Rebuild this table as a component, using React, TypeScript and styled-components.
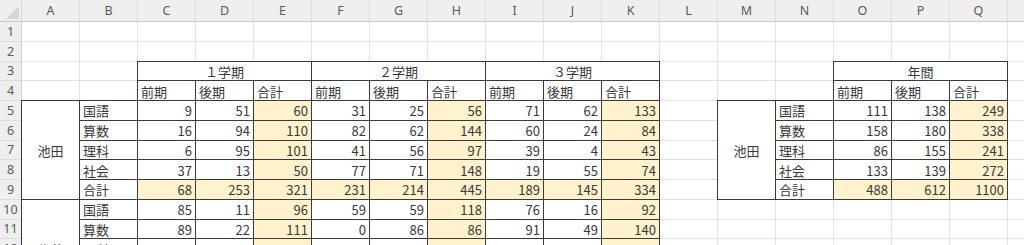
import styled, { createGlobalStyle } from "styled-components";

const GlobalStyle = createGlobalStyle`
  html, body {
    margin: 0;
    padding: 0;
    height: 245px;
    overflow: hidden;
    background: #fff;
  }
`;

type Align = "left" | "right" | "center";

interface CellData {
    text?: string | number;
    align?: Align;
    fill?: boolean;
    border?: boolean;
    colSpan?: number;
    rowSpan?: number;
}

const COLS = "ABCDEFGHIJKLMNOPQR".split("");
const ROWS = 14;

const colIndex = (letter: string) => COLS.indexOf(letter) + 2;

const Sheet = styled.div`
  display: grid;
  grid-template-columns: 22px repeat(18, 58px);
  grid-template-rows: 22px repeat(${ROWS}, 19.75px);
  font-family: "Noto Sans CJK JP", "Noto Sans", sans-serif;
  font-size: 13px;
  color: #383838;
`;

const Corner = styled.div`
  grid-column: 1;
  grid-row: 1;
  background: #efefef;
  border-right: 1px solid #d6d6d6;
  border-bottom: 1px solid #c8c8c8;
  display: flex;
  align-items: flex-end;
  justify-content: flex-end;
  padding: 0 2px 2px 0;
  box-sizing: border-box;
`;

const ColHead = styled.div<{ $col: number }>`
  grid-column: ${(p) => p.$col};
  grid-row: 1;
  background: #efefef;
  border-right: 1px solid #dedede;
  border-bottom: 1px solid #c8c8c8;
  display: flex;
  align-items: center;
  justify-content: center;
  font-family: "Noto Sans", "Liberation Sans", sans-serif;
  font-size: 12.5px;
  color: #5a5a5a;
  box-sizing: border-box;
`;

const RowHead = styled.div<{ $row: number }>`
  grid-column: 1;
  grid-row: ${(p) => p.$row};
  background: #efefef;
  border-right: 1px solid #d2d2d2;
  border-bottom: 1px solid #dedede;
  display: flex;
  align-items: center;
  justify-content: center;
  font-family: "Noto Sans", "Liberation Sans", sans-serif;
  font-size: 12.5px;
  color: #5a5a5a;
  box-sizing: border-box;
`;

const Cell = styled.div<{
    $col: number;
    $row: number;
    $colSpan: number;
    $rowSpan: number;
    $align: Align;
    $fill: boolean;
    $border: boolean;
}>`
  grid-column: ${(p) => p.$col} / span ${(p) => p.$colSpan};
  grid-row: ${(p) => p.$row} / span ${(p) => p.$rowSpan};
  box-sizing: border-box;
  display: flex;
  align-items: center;
  justify-content: ${(p) =>
    p.$align === "left" ? "flex-start" : p.$align === "right" ? "flex-end" : "center"};
  padding: 1px 3px 0 3px;
  white-space: nowrap;
  overflow: hidden;
  background: ${(p) => (p.$fill ? "#fff2cc" : "#fff")};
  border-right: 1px solid ${(p) => (p.$border ? "#3a3a3a" : "#e1e1e1")};
  border-bottom: 1px solid ${(p) => (p.$border ? "#3a3a3a" : "#e1e1e1")};
  ${(p) =>
    p.$border &&
    `
    margin: -1px 0 0 -1px;
    border-top: 1px solid #3a3a3a;
    border-left: 1px solid #3a3a3a;
    position: relative;
    z-index: 1;
  `}
`;

const cells: Record<string, CellData> = {};

const put = (key: string, data: CellData) => {
    cells[key] = { ...cells[key], ...data };
};

const box = (c1: string, c2: string, r1: number, r2: number) => {
    for (let c = colIndex(c1); c <= colIndex(c2); c++) {
        for (let r = r1; r <= r2; r++) {
            put(`${c}:${r + 1}`, { border: true });
        }
    }
};

// left table
const terms = ["１学期", "２学期", "３学期"];
const subjects = ["国語", "算数", "理科", "社会", "合計"];

const ikeda = [
    [9, 51, 60, 31, 25, 56, 71, 62, 133],
    [16, 94, 110, 82, 62, 144, 60, 24, 84],
    [6, 95, 101, 41, 56, 97, 39, 4, 43],
    [37, 13, 50, 77, 71, 148, 19, 55, 74],
    [68, 253, 321, 231, 214, 445, 189, 145, 334],
];

const sato = [
    [85, 11, 96, 59, 59, 118, 76, 16, 92],
    [89, 22, 111, 0, 86, 86, 91, 49, 140],
    [42, 57, 99, 63, 28, 91, 35, 70, 105],
    [71, 38, 109, 24, 93, 117, 58, 12, 70],
    [287, 128, 415, 146, 266, 412, 260, 147, 407],
];

const yearly = [
    [111, 138, 249],
    [158, 180, 338],
    [86, 155, 241],
    [133, 139, 272],
    [488, 612, 1100],
];

box("C", "K", 3, 9);
box("A", "K", 5, 14);
box("O", "Q", 3, 9);
box("M", "Q", 5, 9);

terms.forEach((t, i) => {
    put(`${colIndex("C") + i * 3}:4`, { text: t, align: "center", colSpan: 3 });
    ["前期", "後期", "合計"].forEach((h, j) => {
        put(`${colIndex("C") + i * 3 + j}:5`, { text: h, align: "left" });
    });
});

put(`${colIndex("O")}:4`, { text: "年間", align: "center", colSpan: 3 });
["前期", "後期", "合計"].forEach((h, j) => {
    put(`${colIndex("O") + j}:5`, { text: h, align: "left" });
});

const fillBlock = (name: string, data: number[][], startRow: number) => {
    put(`${colIndex("A")}:${startRow + 1}`, { text: name, align: "center", rowSpan: 5 });
    data.forEach((vals, i) => {
        const r = startRow + i + 1;
        put(`${colIndex("B")}:${r}`, { text: subjects[i], align: "left" });
        vals.forEach((v, j) => {
            put(`${colIndex("C") + j}:${r}`, {
                text: v,
                align: "right",
                fill: i === 4 || j % 3 === 2,
            });
        });
    });
};

fillBlock("池田", ikeda, 5);
fillBlock("佐藤", sato, 10);

put(`${colIndex("M")}:6`, { text: "池田", align: "center", rowSpan: 5 });
yearly.forEach((vals, i) => {
    const r = 6 + i;
    put(`${colIndex("N")}:${r}`, { text: subjects[i], align: "left" });
    vals.forEach((v, j) => {
        put(`${colIndex("O") + j}:${r}`, { text: v, align: "right", fill: i === 4 || j === 2 });
    });
});

const buildCells = () => {
    const covered = new Set<string>();
    const out: JSX.Element[] = [];
    for (let r = 2; r <= ROWS + 1; r++) {
        for (let c = 2; c <= COLS.length + 1; c++) {
            const key = `${c}:${r}`;
            if (covered.has(key)) continue;
            const d = cells[key] ?? {};
            const colSpan = d.colSpan ?? 1;
            const rowSpan = d.rowSpan ?? 1;
            for (let dc = 0; dc < colSpan; dc++) {
                for (let dr = 0; dr < rowSpan; dr++) {
                    covered.add(`${c + dc}:${r + dr}`);
                }
            }
            out.push(
                <Cell
                    key={key}
                    $col={c}
                    $row={r}
                    $colSpan={colSpan}
                    $rowSpan={rowSpan}
                    $align={d.align ?? "left"}
                    $fill={!!d.fill}
                    $border={!!d.border}
                >
                    {d.text}
                </Cell>
            );
        }
    }
    return out;
};

const App = () => {
    return (
        <>
            <GlobalStyle/>
            <Sheet>
                <Corner>
                    <svg width="13" height="13" viewBox="0 0 13 13">
                        <polygon points="13,0 13,13 0,13" fill="#d6d6d6"/>
                    </svg>
                </Corner>
                {COLS.map((c, i) => (
                    <ColHead key={c} $col={i + 2}>{c}</ColHead>
                ))}
                {Array.from({length: ROWS}, (_, i) => (
                    <RowHead key={i} $row={i + 2}>{i + 1}</RowHead>
                ))}
                {buildCells()}
            </Sheet>
        </>
    );
};

export default App;
